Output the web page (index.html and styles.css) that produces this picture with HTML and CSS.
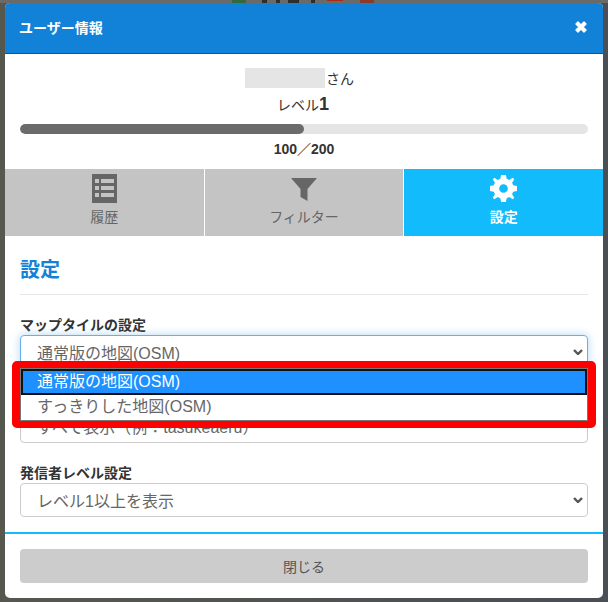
FILE: index.html
```html
<!DOCTYPE html>
<html lang="ja">
<head>
    <meta charset="UTF-8">
    <title>ユーザー情報</title>
    <link rel="stylesheet" href="styles.css">
</head>
<body>
    <!-- 背景の地図の切れ端 -->
    <i class="peek peek-green"></i>
    <i class="peek peek-dark1"></i>
    <i class="peek peek-dark2"></i>
    <i class="peek peek-dark3"></i>
    <i class="peek peek-dark4"></i>
    <i class="peek peek-red1"></i>
    <i class="peek peek-red2"></i>

    <div class="modal">
        <div class="modal-header">
            <span class="modal-title">ユーザー情報</span>
            <svg class="close-icon" viewBox="0 0 12 12" width="12" height="12">
                <path d="M3 1 6 4 9 1 11 3 8 6 11 9 9 11 6 8 3 11 1 9 4 6 1 3Z" fill="#fff" stroke="#fff" stroke-width="1.400" stroke-linejoin="round"/>
            </svg>
        </div>

        <div class="user-box">
            <div class="user-name"><span class="name-mask"></span>さん</div>
            <div class="user-level">レベル<b>1</b></div>
            <div class="progress"><div class="progress-bar" style="width: 50%"></div></div>
            <div class="user-exp">100／200</div>
        </div>

        <div class="tabs">
            <div class="tab">
                <svg class="tab-icon" viewBox="0 0 25 29" width="25" height="29">
                    <path fill-rule="evenodd" fill="#666" d="M0 0H25V29H0ZM3 5V9H7V5ZM9 5V9H22V5ZM3 12V16H7V12ZM9 12V16H22V12ZM3 19V23H7V19ZM9 19V23H22V19Z"/>
                </svg>
                <span>履歴</span>
            </div>
            <div class="tab">
                <svg class="tab-icon" viewBox="0 0 28 29" width="28" height="29">
                    <path fill="#666" d="M1 4H27L17.500 15V27L10.500 23V15Z"/>
                </svg>
                <span>フィルター</span>
            </div>
            <div class="tab active">
                <svg class="tab-icon" viewBox="0 0 28 28" width="27" height="29">
                    <path fill-rule="evenodd" fill="#fff" d="M11.500 0H16.500L17.300 4 20 5.100 23.500 2.900 25.100 4.500 22.900 8 24 10.700 28 11.500V16.500L24 17.300 22.900 20 25.100 23.500 23.500 25.100 20 22.900 17.300 24 16.500 28H11.500L10.700 24 8 22.900 4.500 25.100 2.900 23.500 5.100 20 4 17.300 0 16.500V11.500L4 10.700 5.100 8 2.900 4.500 4.500 2.900 8 5.100 10.700 4ZM14 9.500A4.500 4.500 0 1 0 14 18.500 4.500 4.500 0 1 0 14 9.500Z"/>
                </svg>
                <span>設定</span>
            </div>
        </div>

        <div class="settings">
            <h2 class="settings-title">設定</h2>

            <div class="field">
                <div class="field-label">マップタイルの設定</div>
                <div class="select-wrap">
                    <div class="select focused">
                        <span>通常版の地図(OSM)</span>
                        <svg class="chevron" viewBox="0 0 10 6" width="10" height="6"><path d="M1 1 5 5 9 1" fill="none" stroke="#555" stroke-width="2.400"/></svg>
                    </div>
                    <div class="dropdown-mark">
                        <div class="dropdown">
                            <div class="option selected">通常版の地図(OSM)</div>
                            <div class="option">すっきりした地図(OSM)</div>
                        </div>
                    </div>
                </div>
            </div>

            <div class="field">
                <div class="field-label"></div>
                <div class="select">
                    <span>すべて表示（例：tasukeaeru）</span>
                </div>
            </div>

            <div class="field">
                <div class="field-label">発信者レベル設定</div>
                <div class="select">
                    <span>レベル1以上を表示</span>
                    <svg class="chevron" viewBox="0 0 10 6" width="10" height="6"><path d="M1 1 5 5 9 1" fill="none" stroke="#555" stroke-width="2.400"/></svg>
                </div>
            </div>
        </div>

        <div class="modal-footer">
            <button class="close-btn">閉じる</button>
        </div>
    </div>
</body>
</html>
```

FILE: styles.css
```css
* {
    box-sizing: border-box;
}
html, body {
    height: 100%;
}
body {
    margin: 0;
    padding: 3px 5px 4px 5px;
    background: linear-gradient(#6a6a68 3px, transparent 3px), linear-gradient(90deg, #56574f, #4a4e55);
    font-family: "Liberation Sans", "Noto Sans CJK JP", sans-serif;
    font-size: 14px;
    color: #333;
    overflow: hidden;
}
.peek {
    position: absolute;
    top: 0;
    height: 3px;
    background-color: #2e2e2e;
}
.peek-green { left: 232px; width: 14px; background-color: #2f6b3c; }
.peek-dark1 { left: 262px; width: 5px; }
.peek-dark2 { left: 276px; width: 4px; }
.peek-dark3 { left: 288px; width: 11px; }
.peek-dark4 { left: 311px; width: 4px; }
.peek-red1 { left: 327px; width: 16px; height: 1px; background-color: #a82a1a; }
.peek-red2 { left: 360px; width: 14px; background-color: #8c3a2a; }
.modal {
    display: flex;
    flex-direction: column;
    height: 595px;
    background-color: #fff;
    border-radius: 5px;
    overflow: hidden;
}
.modal-header {
    display: flex;
    flex-shrink: 0;
    justify-content: space-between;
    align-items: center;
    height: 51px;
    padding: 0 16px 2px 14px;
    background-color: #1282d9;
    border-bottom: 1px solid #0b5a96;
}
.modal-title {
    color: #fff;
    font-size: 14px;
    font-weight: bold;
}
.user-box {
    flex-shrink: 0;
    height: 115px;
    padding: 14px 15px 0;
    text-align: center;
}
.user-name {
    display: flex;
    justify-content: center;
    align-items: center;
    height: 20px;
    padding-right: 9px;
    font-size: 14px;
}
.name-mask {
    width: 80px;
    height: 20px;
    margin-right: 1px;
    background-color: #e5e5e5;
}
.user-level {
    margin-top: 5px;
    padding-right: 2px;
    height: 22px;
    font-size: 14px;
    line-height: 22px;
}
.user-level b {
    font-size: 18px;
}
.progress {
    height: 10px;
    margin-top: 9px;
    background-color: #e5e5e5;
    border-radius: 5px;
    overflow: hidden;
}
.progress-bar {
    height: 100%;
    background-color: #6b6b6b;
    border-radius: 5px;
}
.user-exp {
    margin-top: 7px;
    font-size: 14px;
    font-weight: bold;
    line-height: 16px;
}
.tabs {
    display: flex;
    flex-shrink: 0;
    height: 67px;
    border-bottom: 2px solid #12bcfc;
}
.tab {
    flex: 1;
    display: flex;
    flex-direction: column;
    align-items: center;
    padding-top: 5px;
    height: 67px;
    background-color: #c4c4c4;
    border-right: 1px solid #fff;
    color: #666;
    font-size: 14px;
}
.tab.active {
    background-color: #12bcfc;
    border-right: none;
    color: #fff;
    font-weight: bold;
}
.tab-icon {
    display: block;
    margin-bottom: 3px;
}
.settings {
    flex: 1;
    padding: 0 15px;
    border-bottom: 2px solid #12bcfc;
}
.settings-title {
    margin: 0 0 20px;
    padding: 22px 0 12px;
    border-bottom: 1px solid #e8e8e8;
    color: #1282d9;
    font-size: 20px;
    line-height: 24px;
}
.field {
    margin-bottom: 20px;
}
.field:last-child {
    margin-bottom: 0;
}
.field-label {
    height: 20px;
    font-size: 14px;
    font-weight: bold;
    line-height: 20px;
}
.select {
    display: flex;
    justify-content: space-between;
    align-items: center;
    height: 34px;
    padding: 0 4px 0 16px;
    border: 1px solid #ccc;
    border-radius: 4px;
    color: #666;
    font-size: 16px;
}
.select.focused {
    border-color: #66afe9;
    box-shadow: 0 0 8px rgba(102, 175, 233, 0.5);
}
.select-wrap {
    position: relative;
}
.dropdown-mark {
    position: absolute;
    z-index: 1;
    top: 26px;
    left: -8px;
    right: -8px;
    height: 67px;
    border: solid #f00;
    border-width: 7px 8px;
    border-radius: 5px;
    background-color: #fff;
}
.dropdown {
    height: 53px;
    border: 1px solid #777;
    background-color: #fff;
}
.option {
    height: 25px;
    padding-left: 16px;
    color: #666;
    font-size: 16px;
    line-height: 23px;
}
.option.selected {
    height: 26px;
    background-color: #1e90ff;
    color: #fff;
    border: 2px solid #111;
    line-height: 22px;
    padding-left: 14px;
}
.modal-footer {
    flex-shrink: 0;
    height: 64px;
    padding: 15px 15px 0;
}
.close-btn {
    display: block;
    width: 100%;
    height: 34px;
    border: none;
    border-radius: 4px;
    background-color: #ccc;
    color: #555;
    font-family: inherit;
    font-size: 14px;
}
```
